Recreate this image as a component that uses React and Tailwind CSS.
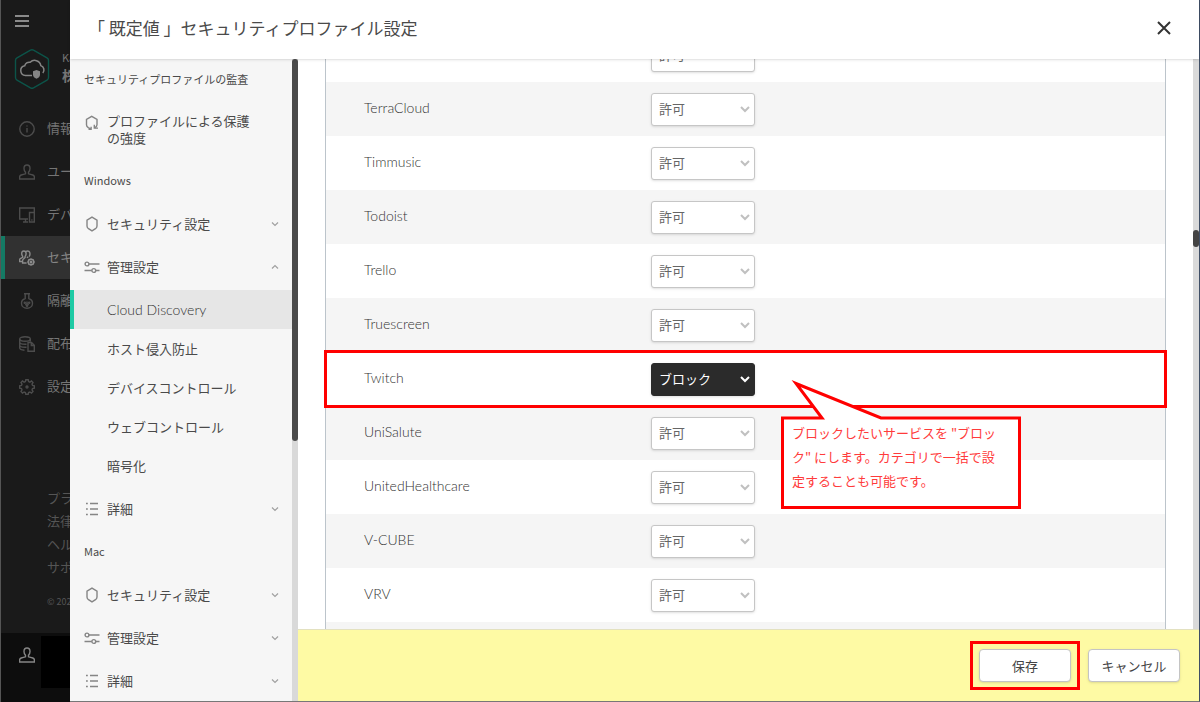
import { Fragment } from "react";

const services = [
  { name: "Tencent", action: "allow" },
  { name: "TerraCloud", action: "allow" },
  { name: "Timmusic", action: "allow" },
  { name: "Todoist", action: "allow" },
  { name: "Trello", action: "allow" },
  { name: "Truescreen", action: "allow" },
  { name: "Twitch", action: "block" },
  { name: "UniSalute", action: "allow" },
  { name: "UnitedHealthcare", action: "allow" },
  { name: "V-CUBE", action: "allow" },
  { name: "VRV", action: "allow" },
  { name: "Wave", action: "allow" },
];

const mainMenu = [
  { icon: "info", label: "情報" },
  { icon: "user", label: "ユーザー" },
  { icon: "devices", label: "デバイス" },
  { icon: "profiles", label: "セキュリティ", active: true },
  { icon: "flask", label: "隔離" },
  { icon: "database", label: "配布" },
  { icon: "gear", label: "設定" },
];

const sections = [
  {
    title: "Windows",
    items: [
      { icon: "shield", label: "セキュリティ設定" },
      {
        icon: "sliders",
        label: "管理設定",
        children: [
          "Cloud Discovery",
          "ホスト侵入防止",
          "デバイスコントロール",
          "ウェブコントロール",
          "暗号化",
        ],
      },
      { icon: "list", label: "詳細" },
    ],
  },
  {
    title: "Mac",
    items: [
      { icon: "shield", label: "セキュリティ設定" },
      { icon: "sliders", label: "管理設定" },
      { icon: "list", label: "詳細" },
    ],
  },
];

const icons = {
  info: (
    <>
      <circle cx="8" cy="8" r="7.2" />
      <path d="M8 7v4.5M8 4.5v1" />
    </>
  ),
  user: (
    <path d="M8 1C5.8 1 5 2.6 5 4.4c0 1.7.7 3 1.5 3.9v1.5L2.2 11c-1 .4-1.6 1.2-1.6 2.2V15h14.8v-1.8c0-1-.6-1.8-1.6-2.2L9.500 9.800V8.300C10.300 7.400 11 6.100 11 4.400 11 2.600 10.200 1 8 1z" />
  ),
  devices: (
    <path d="M9 12H.7V1h14.600v4.500M4 15h5M6.500 12v3M10.500 5.500h4.800V15h-4.800zM12.300 13h1.200" />
  ),
  profiles: (
    <>
      <path d="M4.800 1C3.300 1 2.700 2.200 2.700 3.600c0 1.300.5 2.200 1 2.800v1L1.300 8.500C.8 8.800.6 9.300.6 10v1.500h2.800M7 1.300C9.500.3 11 1.500 11 3.800c0 1.300-.5 2.200-1 2.800M4.800 1c1.500 0 2.300 1.200 2.300 2.600 0 1.300-.5 2.200-1 2.800v1L4.500 9c-.6.4-.9 1-.9 1.700V13h4M7.800 6.800l1.400 1" />
      <circle cx="12" cy="12" r="2.800" />
      <circle cx="12" cy="12" r=".8" />
      <path d="M12 8.400v.8M12 14.800v.8M8.400 12h.8M14.800 12h.8M9.500 9.500l.6.6M14 14l.5.500M9.500 14.500l.6-.6M14 10l.5-.5" />
    </>
  ),
  flask: (
    <>
      <path d="M5 .7h6M6.200.7v4.800C4 6.300 2.500 8.100 2.500 10.200c0 2.900 2.400 5.100 5.500 5.100s5.500-2.200 5.500-5.100c0-2.100-1.500-3.900-3.700-4.700V.7" />
      <circle cx="5.800" cy="9.800" r=".6" />
      <circle cx="10.200" cy="9.800" r=".6" />
      <circle cx="8" cy="12.800" r=".6" />
      <path d="M8 8.500v2L6.300 12M8 10.500 9.700 12" />
    </>
  ),
  database: (
    <>
      <ellipse cx="6" cy="3" rx="5.300" ry="2.200" />
      <path d="M.7 3v9c0 1.200 2 2 4.800 2.200M11.300 3v2.500M.7 6c0 1.200 2.400 2.200 5.300 2.200h1.500M.7 9c0 1.200 2.400 2.200 5.300 2.200h1.500M9 6.500h3.500l2.800 2.800v6H9zM12.300 6.700v2.800h2.800" />
    </>
  ),
  gear: (
    <>
      <path d="M6.800.8h2.400l.4 1.800 1.300.5L12.500 2 14 3.600l-1 1.500.5 1.300 1.800.4v2.400l-1.800.4-.5 1.300 1 1.500-1.500 1.600-1.600-1-1.300.5-.4 1.800H6.800l-.4-1.800-1.300-.5-1.600 1L2 12.400l1-1.500-.5-1.300-1.800-.4V6.800l1.800-.4L3 5.100 2 3.600 3.500 2l1.600 1.100 1.300-.5z" />
      <circle cx="8" cy="8" r="1" />
    </>
  ),
  strength: (
    <>
      <path d="M6.800 14.200 4.300 12.700C3 11.800 2.500 11 2.500 9.800V4.300L7.700 1.400 13 4.300v5.500c0 1.200-.7 2.200-2.200 3.100" />
      <path d="M10.300 9.800v3.300h3.700M4.500 14.400h2.600v-2.600" />
    </>
  ),
  shield: (
    <path d="M8 1.100 13 4.100v5.900c0 1.200-.5 2-1.500 2.700L8 14.900l-3.500-2.200C3.500 12 3 11.200 3 10V4.100z" />
  ),
  sliders: (
    <>
      <circle cx="3" cy="5" r="1.900" />
      <path d="M5 5h10.500M.5 11.500h7.300M11.700 11.500h3.800" />
      <circle cx="9.800" cy="11.500" r="1.900" />
    </>
  ),
  list: (
    <path d="M2 2.500h1.800M6 2.500h8M2 8h1.800M6 8h8M2 13.500h1.800M6 13.500h8" />
  ),
};

function Icon({ name, className }) {
  return (
    <svg
      viewBox="0 0 16 16"
      className={`size-4 shrink-0 ${className}`}
      fill="none"
      stroke="currentColor"
      strokeWidth="1.4"
      aria-hidden="true"
    >
      {icons[name]}
    </svg>
  );
}

function MainSidebar() {
  return (
    <aside className="flex w-[70px] shrink-0 flex-col overflow-hidden border-l border-[#555] bg-[#1a1a1a] text-[13px] whitespace-nowrap text-[#757575]">
      <button type="button" aria-label="メニュー" className="mt-[15px] ml-[14px] flex w-3.5 flex-col gap-[3px]">
        <span className="h-0.5 w-full bg-[#8a8a8a]" />
        <span className="h-0.5 w-full bg-[#8a8a8a]" />
        <span className="h-0.5 w-full bg-[#8a8a8a]" />
      </button>

      <div className="mt-[22px] flex items-center gap-3 pl-[13px]">
        <svg viewBox="0 0 36 40" className="h-10 w-9 shrink-0" fill="none" aria-hidden="true">
          <path
            d="M16.500 1.200a3 3 0 0 1 3 0l13.500 7.600a3 3 0 0 1 1.500 2.600v17.200a3 3 0 0 1-1.500 2.600l-13.500 7.600a3 3 0 0 1-3 0L3 31.200a3 3 0 0 1-1.500-2.600V11.400A3 3 0 0 1 3 8.800z"
            stroke="#0c5449"
            strokeWidth="1.400"
          />
          <path
            d="M18 26.500h-6.500a4.900 4.900 0 0 1-.8-9.700 4.600 4.600 0 0 1 5.500-3.500 6.200 6.200 0 0 1 10.600 3.300 4.600 4.600 0 0 1 2 7.400"
            stroke="#858585"
            strokeWidth="1.500"
          />
          <path d="M22.500 21l3.500 1.200v3.600c0 2-1.500 3.200-3.500 4-2-.8-3.500-2-3.500-4v-3.600z" fill="#858585" />
        </svg>
        <div className="pb-1 leading-4">
          <p className="text-[11px]">Kaspersky</p>
          <p className="text-sm font-bold">株式会社</p>
        </div>
      </div>

      <nav className="mt-[18px]">
        {mainMenu.map((m) => (
          <a
            key={m.label}
            href="#"
            className={`flex h-[43px] items-center gap-3 ${
              m.active
                ? "border-l-4 border-[#147a64] bg-[#313131] pl-3.5 text-[#858585]"
                : "pl-[18px]"
            }`}
          >
            <Icon name={m.icon} className={m.active ? "text-[#8a8a8a]" : "text-[#4c4c4c]"} />
            <span className="pb-0.5">{m.label}</span>
          </a>
        ))}
      </nav>

      <div className="mt-auto mb-5 pl-[46px] text-[13px] leading-[23px] text-[#555]">
        <p>プライバシー</p>
        <p>法律情報</p>
        <p>ヘルプ</p>
        <p>サポート</p>
        <p className="mt-3 text-[9px]">© 2023</p>
      </div>

      <div className="flex h-[69px] shrink-0 gap-1.5 bg-[#0d0d0d] pl-[18px]">
        <Icon name="user" className="mt-3.5 text-[#858585]" />
        <div className="mt-[3px] h-[52px] flex-1 bg-black" />
      </div>
    </aside>
  );
}

function Chevron({ up }) {
  return (
    <svg viewBox="0 0 8 8" className="ml-auto size-2" fill="none" stroke="#a0a0a0" strokeWidth="1.2" aria-hidden="true">
      <path d={up ? "M1 5.500 4 2.500l3 3" : "M1 2.500l3 3 3-3"} />
    </svg>
  );
}

function ProfileNav() {
  return (
    <div className="flex w-[228px] shrink-0 bg-[#f6f6f6]">
      <nav className="min-w-0 flex-1 overflow-hidden text-[13px] text-[#4a4a4a]">
        <h2 className="flex h-[41px] items-center pl-3.5 text-[11px]">セキュリティプロファイルの監査</h2>
        <a href="#" className="flex h-[59px] gap-[7px] pt-3 pr-10 pl-3.5 leading-[17px]">
          <Icon name="strength" className="mt-[3px] text-[#858585]" />
          プロファイルによる保護の強度
        </a>
        {sections.map((section) => (
          <Fragment key={section.title}>
            <h2 className="flex h-[43px] items-center pl-3.5 text-[11px]">{section.title}</h2>
            {section.items.map((item) => (
              <Fragment key={item.label}>
                <button
                  type="button"
                  aria-expanded={Boolean(item.children)}
                  className="flex h-[43px] w-full items-center gap-[7px] pr-[13px] pl-3.5"
                >
                  <Icon name={item.icon} className="text-[#858585]" />
                  {item.label}
                  <Chevron up={Boolean(item.children)} />
                </button>
                {item.children && (
                  <ul className="py-0.5">
                    {item.children.map((child, i) => (
                      <li key={child}>
                        <a
                          href="#"
                          className={`flex h-[39px] items-center ${
                            i === 0
                              ? "border-l-4 border-[#1dcaa4] bg-[#e6e6e6] pl-[33px] font-['Lato','Noto_Sans_CJK_JP',sans-serif] text-sm font-light text-[#333]"
                              : "pl-[37px]"
                          }`}
                        >
                          {child}
                        </a>
                      </li>
                    ))}
                  </ul>
                )}
              </Fragment>
            ))}
          </Fragment>
        ))}
      </nav>
      <div className="w-1.5 bg-[#d9d9d9]">
        <div className="h-[382px] rounded-full bg-[#4a4a4a]" />
      </div>
    </div>
  );
}

function ActionSelect({ service }) {
  const blocked = service.action === "block";
  return (
    <div className="relative w-[104px]">
      <select
        aria-label={service.name}
        defaultValue={service.action}
        className={`block h-[33px] w-full appearance-none rounded-[3px] border px-[7px] text-[13px] shadow-sm ${
          blocked
            ? "border-[#2b2b2b] bg-[#2b2b2b] text-white"
            : "border-[#c6c6c6] bg-white text-[#666]"
        }`}
      >
        <option value="allow">許可</option>
        <option value="block">ブロック</option>
      </select>
      <svg
        viewBox="0 0 10 8"
        className={`pointer-events-none absolute top-3 right-[5px] h-2 w-2.5 ${
          blocked ? "text-white" : "text-[#c0c0c0]"
        }`}
        fill="none"
        stroke="currentColor"
        strokeWidth="2"
        aria-hidden="true"
      >
        <path d="M1 2l4 4 4-4" />
      </svg>
    </div>
  );
}

function Callout() {
  return (
    <div className="absolute top-7 left-[130px] z-10 h-[130px] w-60">
      <svg viewBox="0 0 240 130" className="absolute inset-0 size-full" aria-hidden="true">
        <path
          d="M1.500 38H41L15 3.500 100 38H238.500V127.500H1.500z"
          fill="#fff"
          stroke="#f00"
          strokeWidth="3"
        />
      </svg>
      <p className="relative pt-[41px] pl-[11px] text-[13px] leading-6 whitespace-nowrap text-[#ff3b3b]">
        ブロックしたいサービスを "ブロッ
        <br />
        ク" にします。カテゴリで一括で設
        <br />
        定することも可能です。
      </p>
    </div>
  );
}

function ServiceTable() {
  return (
    <div className="min-w-0 flex-1 overflow-hidden px-[27px]">
      <div className="-mt-[31px] border-x border-[#bcc4cb]">
        <table className="w-full table-fixed">
          <tbody>
            {services.map((s, i) => (
              <tr
                key={s.name}
                className={`h-[54px] ${i % 2 ? "bg-[#f5f5f5]" : "bg-white"} ${
                  s.action === "block" ? "outline-[3px] -outline-offset-1 outline-[#f00]" : ""
                }`}
              >
                <th
                  scope="row"
                  className="w-[325px] pb-0.5 pl-[38px] text-left font-['Lato','Noto_Sans_CJK_JP',sans-serif] text-sm font-light text-[#333]"
                >
                  {s.name}
                </th>
                <td className="relative">
                  <ActionSelect service={s} />
                  {s.action === "block" && <Callout />}
                </td>
              </tr>
            ))}
          </tbody>
        </table>
      </div>
    </div>
  );
}

const buttonStyle =
  "h-[33px] w-[92px] rounded-[4px] border border-[#c4c4c4] bg-white text-[13px] text-[#444] shadow-sm";

export default function App() {
  return (
    <div className="flex h-screen overflow-hidden font-['Noto_Sans_CJK_JP',sans-serif]">
      <MainSidebar />
      <section className="flex min-w-0 flex-1 flex-col border-r border-b border-r-[#3f4e66] border-b-[#777] bg-white">
        <header className="z-10 flex h-[59px] shrink-0 items-center justify-between bg-white pr-7 pb-1 pl-[18px] shadow-sm">
          <h1 className="text-[17px] whitespace-pre text-[#4a4a4a]">「 既定値 」セキュリティプロファイル設定</h1>
          <button type="button" aria-label="閉じる">
            <svg viewBox="0 0 14 14" className="size-3.5" stroke="#333" strokeWidth="2" aria-hidden="true">
              <path d="M1 1l12 12M13 1 1 13" />
            </svg>
          </button>
        </header>
        <div className="flex min-h-0 flex-1">
          <ProfileNav />
          <main className="flex min-w-0 flex-1 flex-col">
            <div className="flex min-h-0 flex-1">
              <ServiceTable />
              <div className="w-1.5 bg-[#dadada] pt-[171px]">
                <div className="h-[17px] rounded-full bg-[#444]" />
              </div>
            </div>
            <footer className="flex h-[72px] shrink-0 items-center justify-end gap-2 border-t border-[#e3e1c0] bg-[#fefaa4] pr-[19px]">
              <div className="border-[3px] border-[#f00] px-1.5 py-[5px]">
                <button type="button" className={buttonStyle}>保存</button>
              </div>
              <button type="button" className={buttonStyle}>キャンセル</button>
            </footer>
          </main>
        </div>
      </section>
    </div>
  );
}
